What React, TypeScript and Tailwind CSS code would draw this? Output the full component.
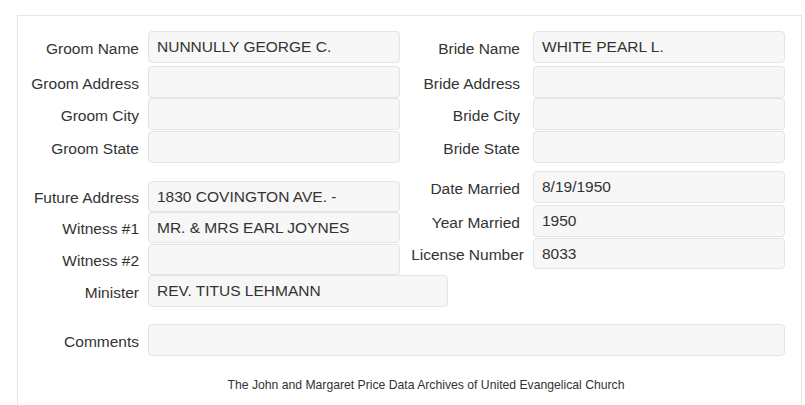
import type { ReactNode } from 'react';

type FieldProps = {
  label: string;
  value?: string;
  rowClass: string;
  labelClass: string;
  inputClass: string;
};

const Field = ({ label, value, rowClass, labelClass, inputClass }: FieldProps) => (
  <div className={`flex items-center ${rowClass}`}>
    <label className={`shrink-0 pt-[3px] text-right ${labelClass}`}>{label}</label>
    <div
      className={`flex h-full shrink-0 items-center rounded-[4px] border border-[#e4e4e4] bg-[#f7f7f7] px-[8px] ${inputClass}`}
    >
      {value}
    </div>
  </div>
);

const Column = ({ children, className }: { children: ReactNode; className: string }) => (
  <div className={`flex flex-col ${className}`}>{children}</div>
);

const LEFT_LABEL = 'w-[121px] mr-[9px]';
const RIGHT_LABEL = 'w-[120px] mr-[13px]';

const App = () => {
  return (
    <div
      className="h-[405px] overflow-hidden bg-white pl-[17px] pr-[3px] pt-[15px] text-[15.5px] text-[#333333]"
      style={{ fontFamily: '"Liberation Sans", Arial, sans-serif' }}
    >
      <div className="min-h-[420px] border border-[#e6e6e6] pt-[15px]">
        {/* names and addresses */}
        <div className="flex">
          <Column className="w-[382px]">
            <Field label="Groom Name" value="NUNNULLY GEORGE C." rowClass="h-[32px]" labelClass={LEFT_LABEL} inputClass="w-[252px]" />
            <Field label="Groom Address" rowClass="mt-[3px] h-[32px]" labelClass={LEFT_LABEL} inputClass="w-[252px]" />
            <Field label="Groom City" rowClass="h-[32px]" labelClass={LEFT_LABEL} inputClass="w-[252px]" />
            <Field label="Groom State" rowClass="mt-px h-[32px]" labelClass={LEFT_LABEL} inputClass="w-[252px]" />
          </Column>
          <Column className="w-[385px]">
            <Field label="Bride Name" value="WHITE PEARL L." rowClass="h-[32px]" labelClass={RIGHT_LABEL} inputClass="w-[252px]" />
            <Field label="Bride Address" rowClass="mt-[3px] h-[32px]" labelClass={RIGHT_LABEL} inputClass="w-[252px]" />
            <Field label="Bride City" rowClass="h-[32px]" labelClass={RIGHT_LABEL} inputClass="w-[252px]" />
            <Field label="Bride State" rowClass="mt-px h-[32px]" labelClass={RIGHT_LABEL} inputClass="w-[252px]" />
          </Column>
        </div>

        {/* marriage details */}
        <div className="mt-[8px] flex items-start">
          <Column className="mt-[10px] w-[382px]">
            <Field label="Future Address" value="1830 COVINGTON AVE. -" rowClass="h-[31px]" labelClass={LEFT_LABEL} inputClass="w-[252px]" />
            <Field label="Witness #1" value="MR. & MRS EARL JOYNES" rowClass="h-[31px]" labelClass={LEFT_LABEL} inputClass="w-[252px]" />
            <Field label="Witness #2" rowClass="mt-px h-[31px]" labelClass={LEFT_LABEL} inputClass="w-[252px]" />
            <Field label="Minister" value="REV. TITUS LEHMANN" rowClass="h-[32px]" labelClass={LEFT_LABEL} inputClass="w-[300px]" />
          </Column>
          <Column className="w-[385px]">
            <Field label="Date Married" value="8/19/1950" rowClass="h-[32px]" labelClass={RIGHT_LABEL} inputClass="w-[252px]" />
            <Field label="Year Married" value="1950" rowClass="mt-[2px] h-[32px]" labelClass={RIGHT_LABEL} inputClass="w-[252px]" />
            <Field label="License Number" value="8033" rowClass="mt-px h-[31px]" labelClass="w-[124px] mr-[9px]" inputClass="w-[252px]" />
          </Column>
        </div>

        <Field label="Comments" rowClass="mt-[17px] h-[32px]" labelClass={LEFT_LABEL} inputClass="w-[637px]" />

        <p className="mt-[20px] pl-[33px] text-center text-[12.2px] text-[#333333]">
          The John and Margaret Price Data Archives of United Evangelical Church
        </p>
      </div>
    </div>
  );
};

export default App;
